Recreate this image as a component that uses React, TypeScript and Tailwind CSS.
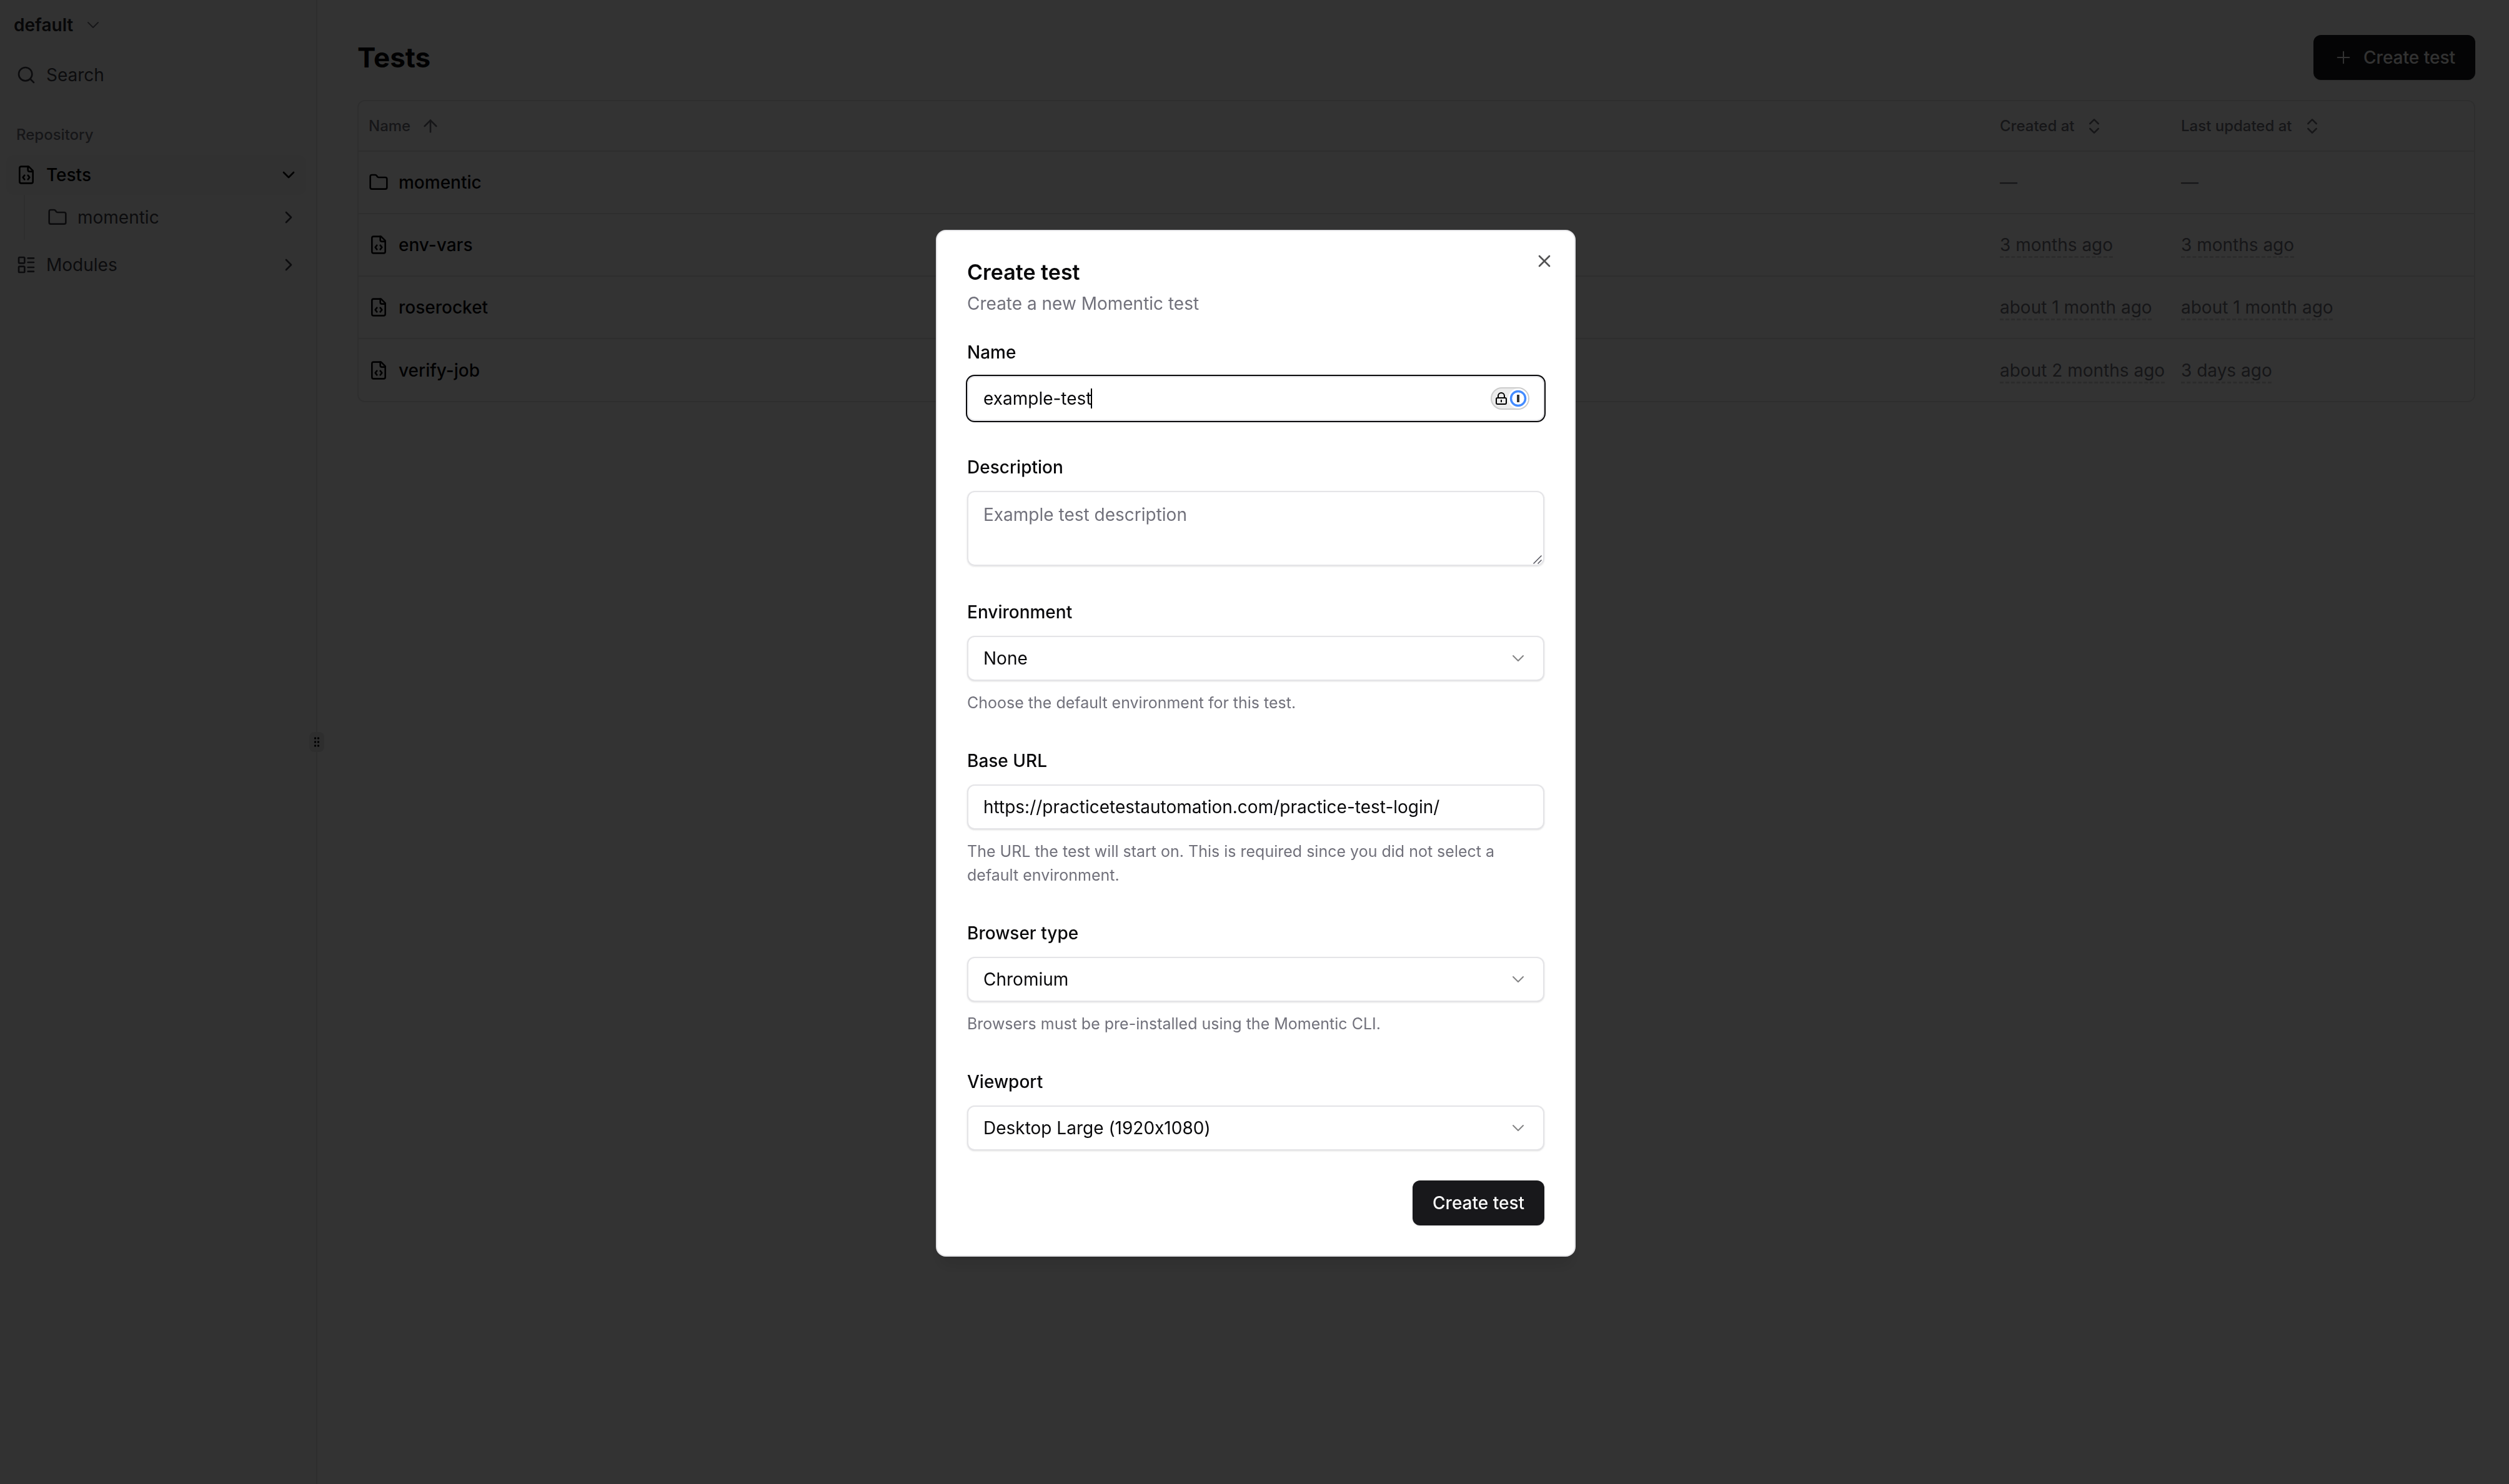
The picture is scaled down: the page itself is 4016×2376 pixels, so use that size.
import type { ReactNode } from 'react';
import {
  ArrowUp,
  ChevronDown,
  ChevronRight,
  ChevronsUpDown,
  Folder,
  LayoutList,
  Plus,
  Search,
  X,
} from 'lucide-react';

const rows = [
  { name: 'momentic', folder: true, created: '—', updated: '—' },
  { name: 'env-vars', folder: false, created: '3 months ago', updated: '3 months ago' },
  { name: 'roserocket', folder: false, created: 'about 1 month ago', updated: 'about 1 month ago' },
  { name: 'verify-job', folder: false, created: 'about 2 months ago', updated: '3 days ago' },
];

const controlClass =
  'block w-full h-[72px] rounded-xl border-2 border-zinc-200 bg-white px-6 text-[28px] text-zinc-950 shadow-sm outline-none';

function FileCodeIcon() {
  return (
    <svg
      className="size-8 shrink-0"
      viewBox="0 0 24 24"
      fill="none"
      stroke="currentColor"
      strokeWidth={2}
      strokeLinecap="round"
      strokeLinejoin="round"
    >
      <path d="M15 2H6a2 2 0 0 0-2 2v16a2 2 0 0 0 2 2h12a2 2 0 0 0 2-2V7Z" />
      <path d="M14 2v4a2 2 0 0 0 2 2h4" />
      <path d="M10 12.500 8 15l2 2.500" />
      <path d="m14 12.500 2 2.500-2 2.500" />
    </svg>
  );
}

function Sidebar() {
  return (
    <aside className="relative w-[508px] shrink-0 border-r-2 border-zinc-200 bg-[#fafafa] px-[10px] text-[28px] text-zinc-700">
      <button type="button" className="flex h-20 items-center gap-4 pl-3 font-semibold text-zinc-800">
        default
        <ChevronDown className="size-8 text-zinc-500" strokeWidth={1.5} />
      </button>

      <button type="button" className="mt-2 flex h-16 w-full items-center gap-4 pl-4">
        <Search className="size-8" />
        Search
      </button>

      <h2 className="mt-11 pl-4 text-2xl/10 font-medium text-zinc-500">Repository</h2>

      <nav className="mt-3 w-[480px]">
        <a href="#tests" className="flex h-16 items-center gap-4 rounded-xl bg-[#f4f4f5] pr-3 pl-4 font-medium text-black">
          <FileCodeIcon />
          <span className="flex-1">Tests</span>
          <ChevronDown className="size-8" />
        </a>
        <div className="ml-7 border-l-2 border-zinc-200 py-1">
          <a href="#momentic" className="flex h-16 items-center gap-4 pr-3 pl-9">
            <Folder className="size-8" />
            <span className="flex-1">momentic</span>
            <ChevronRight className="size-8" />
          </a>
        </div>
        <a href="#modules" className="mt-2 flex h-16 items-center gap-4 pr-3 pl-4">
          <LayoutList className="size-8" />
          <span className="flex-1">Modules</span>
          <ChevronRight className="size-8" />
        </a>
      </nav>

      {/* resize handle */}
      <div className="absolute top-1/2 -right-[13px] flex h-8 w-6 -translate-y-1/2 items-center justify-center rounded-lg bg-zinc-200 text-black">
        <svg width="10" height="18" viewBox="0 0 10 18" fill="currentColor">
          {[3, 9, 15].map((y) => (
            <g key={y}>
              <circle cx="2.500" cy={y} r="1.700" />
              <circle cx="7.500" cy={y} r="1.700" />
            </g>
          ))}
        </svg>
      </div>
    </aside>
  );
}

function TimeCell({ value }: { value: string }) {
  if (value === '—') return <>{value}</>;
  return (
    <span className="underline decoration-zinc-300 decoration-dashed decoration-[3px] underline-offset-8">{value}</span>
  );
}

function TestsTable() {
  return (
    <div className="mt-8 overflow-hidden rounded-xl border-2 border-zinc-200">
      <table className="w-full table-fixed text-left text-[28px] text-zinc-500">
        <thead>
          <tr className="h-20 border-b-2 border-zinc-200 text-2xl">
            <th className="px-4 font-medium">
              <span className="flex items-center gap-4">
                Name
                <ArrowUp className="size-8" />
              </span>
            </th>
            <th className="w-[290px] px-4 font-medium">
              <span className="flex items-center gap-4">
                Created at
                <ChevronsUpDown className="size-8" />
              </span>
            </th>
            <th className="w-[485px] px-4 font-medium">
              <span className="flex items-center gap-4">
                Last updated at
                <ChevronsUpDown className="size-8" />
              </span>
            </th>
          </tr>
        </thead>
        <tbody>
          {rows.map((row) => (
            <tr key={row.name} className="h-[100px] border-b-2 border-zinc-200 last:border-b-0">
              <td className="px-4">
                <a href={`#${row.name}`} className="flex items-center gap-4 font-medium text-zinc-950">
                  {row.folder ? <Folder className="size-8" /> : <FileCodeIcon />}
                  {row.name}
                </a>
              </td>
              <td className="px-4 whitespace-nowrap">
                <TimeCell value={row.created} />
              </td>
              <td className="px-4 whitespace-nowrap">
                <TimeCell value={row.updated} />
              </td>
            </tr>
          ))}
        </tbody>
      </table>
    </div>
  );
}

function Field({ id, label, hint, children }: { id: string; label: string; hint?: string; children: ReactNode }) {
  return (
    <div>
      <label htmlFor={id} className="mb-6 block text-[28px] leading-7 font-medium text-zinc-950">
        {label}
      </label>
      {children}
      {hint && <p className="mt-4 text-[25px] leading-[38px] text-zinc-500">{hint}</p>}
    </div>
  );
}

function SelectBox({ id, value }: { id: string; value: string }) {
  return (
    <div className="relative">
      <select id={id} className={`${controlClass} appearance-none`}>
        <option>{value}</option>
      </select>
      <ChevronDown
        className="pointer-events-none absolute top-5 right-[26px] size-8 text-zinc-950 opacity-50"
        strokeWidth={1.5}
      />
    </div>
  );
}

function PasswordManagerBadge() {
  return (
    <svg
      className="absolute top-[18px] right-6 h-9 w-[62px]"
      viewBox="0 0 62 36"
      fill="none"
    >
      <rect x="1" y="1" width="60" height="34" rx="17" fill="#ececec" stroke="#cccccc" strokeWidth="2" />
      <circle cx="44" cy="18" r="16" fill="#ffffff" />
      <circle cx="44" cy="18" r="11.500" fill="#ffffff" stroke="#448cff" strokeWidth="3.500" />
      <rect x="42" y="12" width="4" height="12" fill="#333333" />
      <rect x="9" y="17" width="16" height="10" rx="2" stroke="#000000" strokeWidth="2" />
      <path d="M12 17v-3a5 5 0 0 1 10 0v3" stroke="#000000" strokeWidth="2" />
      <rect x="16" y="20" width="2" height="4" fill="#000000" />
    </svg>
  );
}

function CreateTestDialog() {
  return (
    <div
      role="dialog"
      aria-labelledby="dialog-title"
      className="relative w-[1024px] rounded-2xl border-2 border-zinc-200 bg-white p-12 shadow-xl"
    >
      <h2 id="dialog-title" className="text-[34px] leading-9 font-semibold text-zinc-950">
        Create test
      </h2>
      <p className="mt-3 text-[28px] leading-10 text-zinc-500">Create a new Momentic test</p>
      <button type="button" aria-label="Close" className="absolute top-8 right-8 text-zinc-950 opacity-70">
        <X className="size-8" />
      </button>

      <form className="mt-11">
        <div className="flex flex-col gap-[60px]">
          <Field id="name" label="Name">
            <div className="relative">
              <input id="name" type="text" defaultValue="example-test" className={`${controlClass} ring-2 ring-zinc-950`} />
              {/* text cursor */}
              <span className="absolute top-5 left-[198px] h-8 w-[2px] bg-black" />
              <PasswordManagerBadge />
            </div>
          </Field>
          <Field id="description" label="Description">
            <div className="relative">
              <textarea
                id="description"
                placeholder="Example test description"
                className="block h-[120px] w-full resize-none rounded-xl border-2 border-zinc-200 px-6 py-4 text-[28px] leading-10 shadow-sm outline-none placeholder:text-zinc-500"
              />
              <svg className="absolute right-1 bottom-[3px] size-[14px] text-zinc-600" viewBox="0 0 14 14" stroke="currentColor" strokeWidth={1.5}>
                <path d="M0.500 13.500 13.500 0.500M7.500 13.500l6-6" />
              </svg>
            </div>
          </Field>
          <Field id="environment" label="Environment" hint="Choose the default environment for this test.">
            <SelectBox id="environment" value="None" />
          </Field>
          <Field
            id="base-url"
            label="Base URL"
            hint="The URL the test will start on. This is required since you did not select a default environment."
          >
            <input
              id="base-url"
              type="text"
              defaultValue="https://practicetestautomation.com/practice-test-login/"
              className={controlClass}
            />
          </Field>
          <Field id="browser" label="Browser type" hint="Browsers must be pre-installed using the Momentic CLI.">
            <SelectBox id="browser" value="Chromium" />
          </Field>
          <Field id="viewport" label="Viewport">
            <SelectBox id="viewport" value="Desktop Large (1920x1080)" />
          </Field>
        </div>
        <div className="mt-12 flex justify-end">
          <button
            type="button"
            className="h-[72px] rounded-xl bg-zinc-900 px-8 text-[28px] font-medium text-zinc-50 shadow-sm"
          >
            Create test
          </button>
        </div>
      </form>
    </div>
  );
}

export default function App() {
  return (
    <div className="flex min-h-screen bg-white font-[Inter,'Liberation_Sans',sans-serif] text-zinc-950 [font-variant-ligatures:no-contextual]">
      <Sidebar />
      <main className="min-w-0 flex-1 pt-14 pr-[54px] pl-16">
        <div className="flex items-center justify-between">
          <h1 className="text-[44px] font-bold">Tests</h1>
          <button
            type="button"
            className="flex h-[72px] items-center gap-4 rounded-xl bg-zinc-900 px-8 text-[28px] font-medium text-zinc-50 shadow-sm"
          >
            <Plus className="size-8" strokeWidth={1.5} />
            Create test
          </button>
        </div>
        <TestsTable />
      </main>

      <div className="fixed inset-0 flex items-center justify-center bg-black/80 pt-1 pl-1">
        <CreateTestDialog />
      </div>
    </div>
  );
}
